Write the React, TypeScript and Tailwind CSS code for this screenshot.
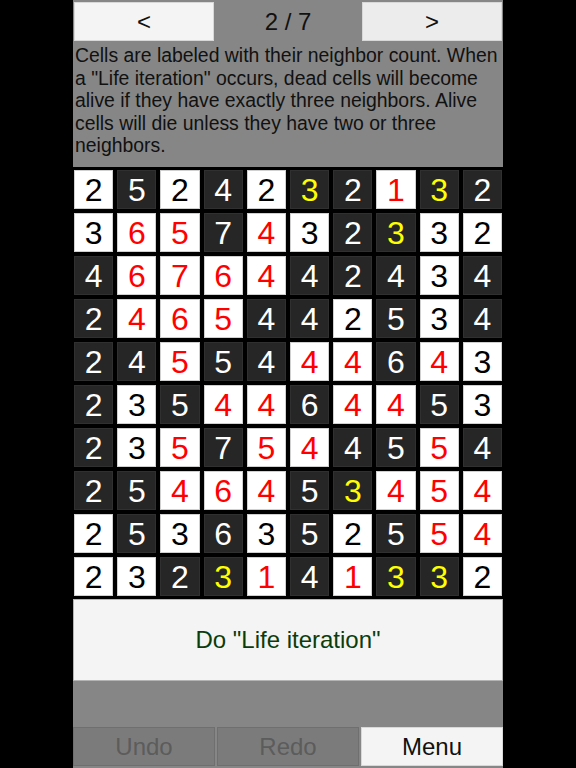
import React from "react";

const FONT = { fontFamily: '"Liberation Sans", Arial, sans-serif' };

// neighbor counts and alive state per row
const VALUES = [
  [2, 5, 2, 4, 2, 3, 2, 1, 3, 2],
  [3, 6, 5, 7, 4, 3, 2, 3, 3, 2],
  [4, 6, 7, 6, 4, 4, 2, 4, 3, 4],
  [2, 4, 6, 5, 4, 4, 2, 5, 3, 4],
  [2, 4, 5, 5, 4, 4, 4, 6, 4, 3],
  [2, 3, 5, 4, 4, 6, 4, 4, 5, 3],
  [2, 3, 5, 7, 5, 4, 4, 5, 5, 4],
  [2, 5, 4, 6, 4, 5, 3, 4, 5, 4],
  [2, 5, 3, 6, 3, 5, 2, 5, 5, 4],
  [2, 3, 2, 3, 1, 4, 1, 3, 3, 2],
];

const ALIVE = [
  "1010100100",
  "1110110011",
  "0111100010",
  "0111001010",
  "0010011011",
  "0101101101",
  "0110110010",
  "0011100111",
  "1010101011",
  "1100101001",
];

function Cell({ value, alive }: { value: number; alive: boolean }) {
  let cls = "";
  if (alive) {
    cls =
      value === 2 || value === 3
        ? "bg-white border-[#d0d0d0] text-black"
        : "bg-white border-[#d0d0d0] text-[#ff0000]";
  } else {
    cls =
      value === 3
        ? "bg-[#262626] border-[#303030] text-[#ffff00]"
        : "bg-[#262626] border-[#303030] text-white";
  }
  return (
    <div
      className={`flex h-[39px] items-center justify-center border text-[32px] leading-none ${cls}`}
    >
      {value}
    </div>
  );
}

export default function App() {
  return (
    <div className="flex h-[768px] w-full justify-center bg-black" style={FONT}>
      <div className="flex w-[430px] flex-col bg-[#868686]">
        {/* top nav */}
        <div className="flex h-[41px] items-stretch px-px pt-[2px]">
          <button className="w-[140px] border border-[#d8d8d8] bg-[#f4f4f4] text-[24px] text-[#111]">
            &lt;
          </button>
          <div className="flex flex-1 items-center justify-center text-[24px] text-[#111]">
            2 / 7
          </div>
          <button className="w-[140px] border border-[#d8d8d8] bg-[#ececec] text-[24px] text-[#111]">
            &gt;
          </button>
        </div>

        {/* help text */}
        <p className="h-[126px] pl-[2px] pt-[3px] text-[19.4px] leading-[22.5px] text-[#111]">
          Cells are labeled with their neighbor count. When a "Life iteration"
          occurs, dead cells will become alive if they have exactly three
          neighbors. Alive cells will die unless they have two or three
          neighbors.
        </p>

        {/* board */}
        <div className="grid grid-cols-10 gap-[4px] bg-black pb-[3px] pl-px pr-px pt-[3px]">
          {VALUES.map((row, r) =>
            row.map((v, c) => (
              <Cell key={`${r}-${c}`} value={v} alive={ALIVE[r][c] === "1"} />
            ))
          )}
        </div>

        <button className="h-[82px] border border-[#b4b4b4] bg-[#f4f4f4] text-[24px] text-[#0b3d0b]">
          Do "Life iteration"
        </button>

        <div className="flex-1" />

        <div className="flex h-[41px] gap-[2px] pb-[2px]">
          <button className="flex-1 border border-[#6f6f6f] bg-[#7b7b7b] text-[24px] text-[#5c5c5c]">
            Undo
          </button>
          <button className="flex-1 border border-[#6f6f6f] bg-[#7b7b7b] text-[24px] text-[#5c5c5c]">
            Redo
          </button>
          <button className="flex-1 border border-[#d8d8d8] bg-[#f4f4f4] text-[24px] text-[#111]">
            Menu
          </button>
        </div>
      </div>
    </div>
  );
}
